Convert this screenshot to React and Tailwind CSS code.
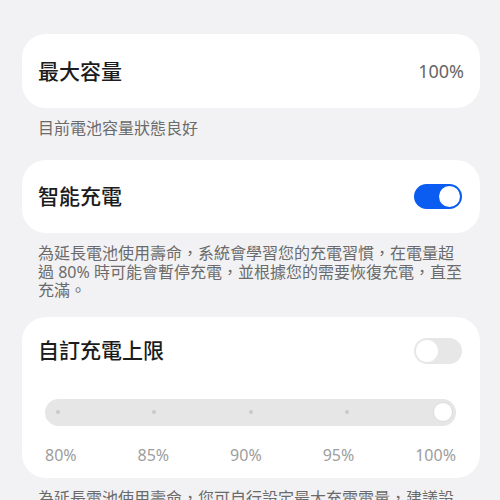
export default function App() {
  const font = { fontFamily: '"Noto Sans", "Noto Sans CJK TC", sans-serif' };
  const Dot = () => (
    <div className="w-[20px] h-[20px] flex items-center justify-center">
      <div className="w-[4px] h-[4px] rounded-full bg-[#c9c9c9]"></div>
    </div>
  );
  return (
    <div className="w-[500px] h-[500px] overflow-hidden bg-[#f2f2f4] pl-[22px] pr-[20px] pt-[34px]" style={font}>
      <div className="h-[74px] rounded-[24px] bg-white flex items-center justify-between pl-[16px] pr-[16px]">
        <span className="text-[21px] font-medium text-[#1c1c1c] leading-none">最大容量</span>
        <span className="text-[18px] text-[#666666] leading-none">100%</span>
      </div>
      <p className="mt-[11px] mb-[22px] pl-[16px] text-[16px] leading-[19px] text-[#6b6b6b]">目前電池容量狀態良好</p>

      <div className="h-[73px] rounded-[24px] bg-white flex items-center justify-between pl-[16px] pr-[18px]">
        <span className="text-[21px] font-medium text-[#1c1c1c] leading-none">智能充電</span>
        <div className="w-[48px] h-[25px] rounded-full bg-[#0b5cf0] flex items-center justify-end pr-[2px]">
          <div className="w-[21px] h-[21px] rounded-full bg-white"></div>
        </div>
      </div>
      <p className="mt-[11px] mb-[17px] pl-[16px] pr-[14px] text-[16px] leading-[18.5px] text-[#6b6b6b]">
        為延長電池使用壽命，系統會學習您的充電習慣，在電量超過 80% 時可能會暫停充電，並根據您的需要恢復充電，直至充滿。
      </p>

      <div className="rounded-[24px] bg-white pt-[21px] pb-[13px]">
        <div className="flex items-center justify-between pl-[16px] pr-[18px] h-[26px]">
          <span className="text-[21px] font-medium text-[#1c1c1c] leading-none">自訂充電上限</span>
          <div className="w-[48px] h-[26px] rounded-full bg-[#e7e7e7] flex items-center justify-start pl-[2px]">
            <div className="w-[22px] h-[22px] rounded-full bg-white"></div>
          </div>
        </div>
        <div className="ml-[23px] mr-[24px] mt-[35px] h-[27px] rounded-full bg-[#e6e6e6] flex items-center justify-between px-[3px]">
          <Dot />
          <Dot />
          <Dot />
          <Dot />
          <div className="w-[20px] h-[20px] rounded-full bg-white border border-[#dcdcdc]"></div>
        </div>
        <div className="ml-[23px] mr-[24px] mt-[19px] flex justify-between text-[16px] leading-[20px] text-[#9d9d9d]">
          <span>80%</span>
          <span>85%</span>
          <span>90%</span>
          <span>95%</span>
          <span>100%</span>
        </div>
      </div>
      <p className="mt-[11px] pl-[16px] pr-[14px] text-[16px] leading-[18.5px] text-[#6b6b6b]">
        為延長電池使用壽命，您可自行設定最大充電電量，建議設定為 80% 以上。
      </p>
    </div>
  );
}
